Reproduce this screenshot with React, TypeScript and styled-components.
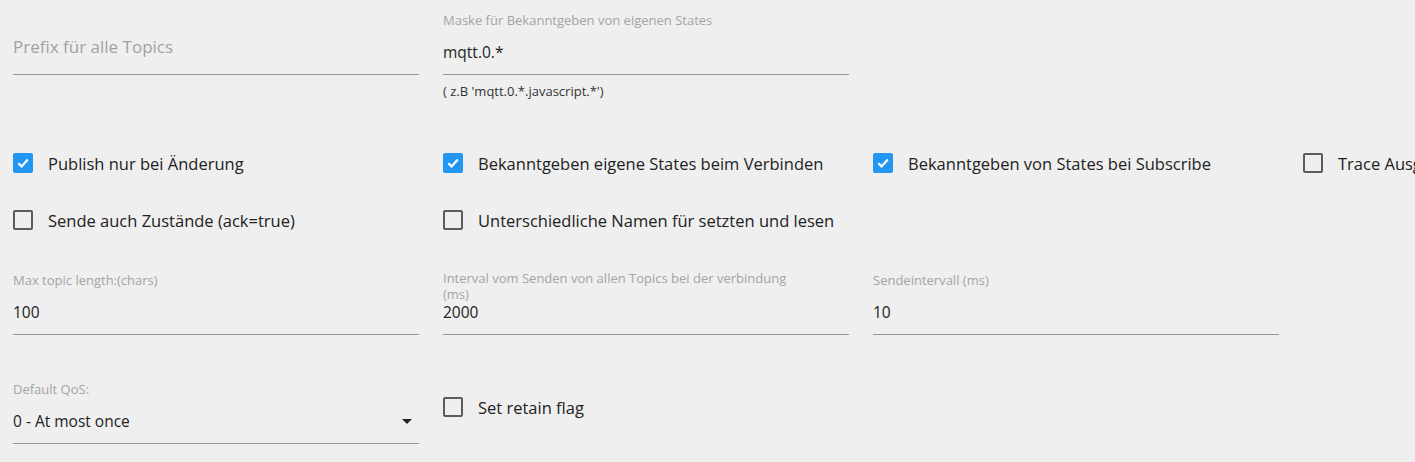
import React from "react";
import styled, { createGlobalStyle } from "styled-components";

const GlobalStyle = createGlobalStyle`
  html, body {
    margin: 0;
    padding: 0;
    background: #efefef;
    overflow: hidden;
  }
  body {
    font-family: "Open Sans", "Liberation Sans", sans-serif;
    color: #222;
  }
`;

const Page = styled.div`
  width: 1415px;
  height: 462px;
  box-sizing: border-box;
  padding: 13px 0 0 13px;
  background: #efefef;
  overflow: hidden;
  display: flex;
  flex-direction: column;
`;

const Row = styled.div<{ $top?: number }>`
  display: grid;
  grid-template-columns: repeat(4, 406px);
  column-gap: 24px;
  margin-top: ${(p) => p.$top ?? 0}px;
  align-items: start;
`;

const CheckGrid = styled.div<{ $top?: number }>`
  display: grid;
  grid-template-columns: repeat(4, 406px);
  column-gap: 24px;
  grid-auto-rows: 40px;
  row-gap: 17px;
  margin-top: ${(p) => p.$top ?? 0}px;
`;

const Field = styled.div`
  position: relative;
  display: flex;
  flex-direction: column;
  width: 406px;
`;

const Label = styled.div<{ $wrapped?: boolean }>`
  height: 14px;
  line-height: ${(p) => (p.$wrapped ? 16 : 14)}px;
  margin-top: ${(p) => (p.$wrapped ? -3 : 0)}px;
  margin-bottom: ${(p) => (p.$wrapped ? 3 : 0)}px;
  font-size: 13px;
  color: #a4a4a4;
  max-width: 350px;
  white-space: normal;
  overflow: visible;
`;

const Placeholder = styled.div`
  position: absolute;
  left: 0;
  top: 22px;
  line-height: 24px;
  font-size: 17px;
  color: #a2a2a2;
`;

const InputLine = styled.div`
  display: flex;
  align-items: center;
  justify-content: space-between;
  box-sizing: content-box;
  height: 24px;
  line-height: 24px;
  padding: 13px 7px 10px 0;
  border-bottom: 1px solid #969696;
  font-size: 15.5px;
  color: #222;
`;

const Helper = styled.div`
  margin-top: 9px;
  line-height: 14px;
  font-size: 13px;
  color: #333;
`;

const CheckItem = styled.label<{ $offset?: number }>`
  display: flex;
  align-items: center;
  gap: 15px;
  height: 40px;
  margin-top: ${(p) => p.$offset ?? 0}px;
  font-size: 16.5px;
  color: #222;
  white-space: nowrap;
  cursor: pointer;
`;

const Box = styled.span<{ $checked: boolean }>`
  flex: none;
  width: 20px;
  height: 20px;
  box-sizing: border-box;
  border-radius: 2px;
  display: flex;
  align-items: center;
  justify-content: center;
  background: ${(p) => (p.$checked ? "#2196f3" : "transparent")};
  border: ${(p) => (p.$checked ? "none" : "2px solid #5c5c5c")};
`;

const Arrow = () => (
  <svg width="10" height="5" viewBox="0 0 10 5">
    <path d="M0 0 L10 0 L5 5 Z" fill="#222" />
  </svg>
);

const Check = ({ label, checked, offset }: { label: string; checked?: boolean; offset?: number }) => (
  <CheckItem $offset={offset}>
    <Box $checked={!!checked}>
      {checked && (
        <svg width="14" height="14" viewBox="0 0 14 14">
          <path d="M2.3 7.2 L5.6 10.4 L11.8 3.4" fill="none" stroke="#fff" strokeWidth="2.2" />
        </svg>
      )}
    </Box>
    {label}
  </CheckItem>
);

const TextField = ({
  label,
  value,
  helper,
  placeholder,
  select,
  wrapped,
}: {
  label?: string;
  value?: string;
  helper?: string;
  placeholder?: string;
  select?: boolean;
  wrapped?: boolean;
}) => (
  <Field>
    <Label $wrapped={wrapped}>{label}</Label>
    {placeholder && <Placeholder>{placeholder}</Placeholder>}
    <InputLine>
      <span>{value}</span>
      {select && <Arrow />}
    </InputLine>
    {helper && <Helper>{helper}</Helper>}
  </Field>
);

export default function App() {
  return (
    <>
      <GlobalStyle />
      <Page>
        <Row>
          <TextField placeholder="Prefix für alle Topics" />
          <TextField
            label="Maske für Bekanntgeben von eigenen States"
            value="mqtt.0.*"
            helper="( z.B 'mqtt.0.*.javascript.*')"
          />
        </Row>
        <CheckGrid $top={45}>
          <Check label="Publish nur bei Änderung" checked />
          <Check label="Bekanntgeben eigene States beim Verbinden" checked />
          <Check label="Bekanntgeben von States bei Subscribe" checked />
          <Check label="Trace Ausgabe für jede Nachricht" />
          <Check label="Sende auch Zustände (ack=true)" />
          <Check label="Unterschiedliche Namen für setzten und lesen" />
        </CheckGrid>
        <Row $top={33}>
          <TextField label="Max topic length:(chars)" value="100" />
          <TextField label="Interval vom Senden von allen Topics bei der verbindung (ms)" value="2000" wrapped />
          <TextField label="Sendeintervall (ms)" value="10" />
        </Row>
        <Row $top={47}>
          <TextField label="Default QoS:" value="0 - At most once" select />
          <Check label="Set retain flag" offset={5} />
        </Row>
      </Page>
    </>
  );
}
